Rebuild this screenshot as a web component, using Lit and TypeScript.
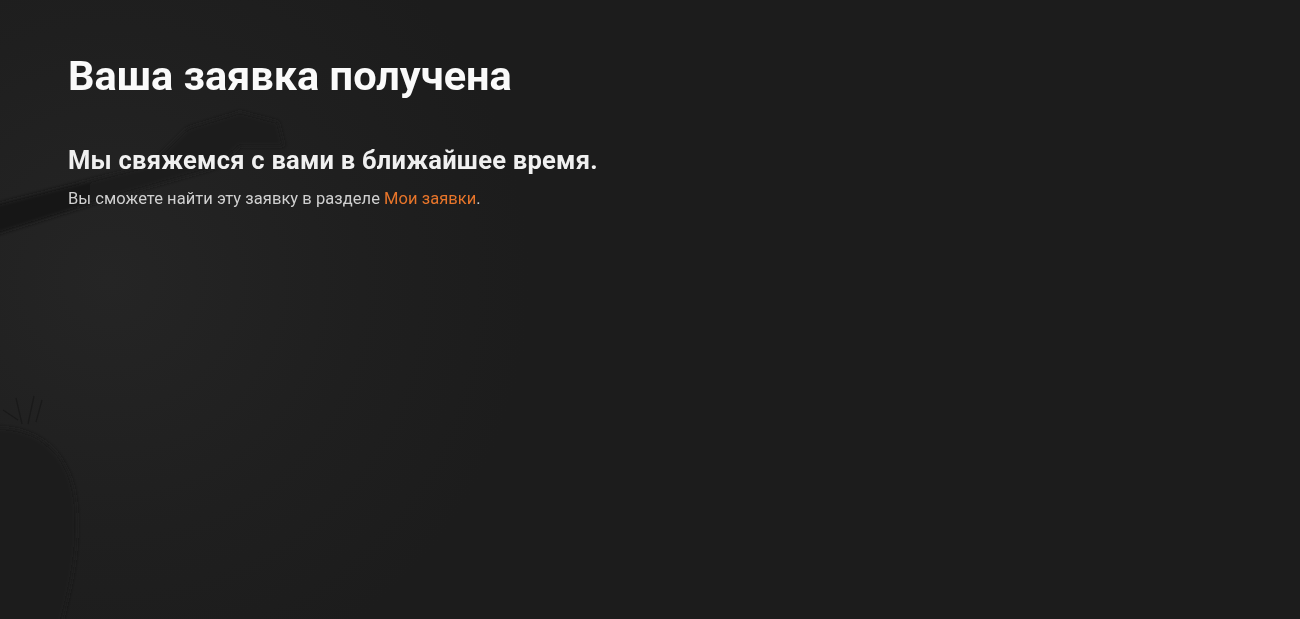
import { LitElement, html, css, svg } from "lit";
import { customElement } from "lit/decorators.js";

@customElement("app-root")
export class AppRoot extends LitElement {
  static styles = css`
    :host {
      display: block;
      position: relative;
      width: 100%;
      height: 619px;
      overflow: hidden;
      background: #1c1c1c;
      font-family: Roboto, "Liberation Sans", sans-serif;
      color: #fff;
    }
    .art {
      position: absolute;
      left: 0;
      top: 0;
      width: 1300px;
      height: 619px;
    }
    .content {
      position: relative;
      display: flex;
      flex-direction: column;
      align-items: flex-start;
      padding: 52px 0 0 68px;
    }
    h1 {
      margin: 0;
      font-size: 41.5px;
      line-height: 48px;
      font-weight: 700;
      color: #fafafa;
      filter: blur(0.5px);
    }
    h2 {
      margin: 44px 0 0;
      font-size: 25.5px;
      line-height: 32px;
      font-weight: 700;
      letter-spacing: 0.24px;
      color: #f0f0f0;
      filter: blur(0.5px);
    }
    p {
      margin: 13px 0 0;
      font-size: 16.5px;
      line-height: 20px;
      letter-spacing: 0.05px;
      color: #d0d0d0;
      filter: blur(0.6px);
    }
    a {
      color: #e8752a;
      text-decoration: none;
    }
  `;

  private art() {
    return svg`
      <defs>
        <radialGradient id="glow" gradientUnits="userSpaceOnUse" cx="110" cy="280" r="420">
          <stop offset="0" stop-color="#252525" />
          <stop offset="0.6" stop-color="#1f1f1f" />
          <stop offset="1" stop-color="#1c1c1c" />
        </radialGradient>
        <linearGradient id="gun" x1="0" y1="0" x2="1" y2="0">
          <stop offset="0" stop-color="#181818" />
          <stop offset="1" stop-color="#1d1d1d" />
        </linearGradient>
        <filter id="soft"><feGaussianBlur stdDeviation="2" /></filter>
      </defs>
      <rect width="1300" height="619" fill="#1c1c1c" />
      <rect width="640" height="619" fill="url(#glow)" />
      <g filter="url(#soft)">
        <path d="M-10 206L150 165L188 128L240 112L278 122L284 146L240 146L215 168L120 195L-10 236Z" fill="url(#gun)" />
        <path d="M-10 428C40 425 72 455 76 505C80 550 70 590 60 629H-10Z" fill="#1b1b1b" />
      </g>
      <path d="M3 410L18 420M16 398L22 424M34 396L28 424M42 400L36 422" stroke="#191919" stroke-width="1.2" fill="none" />
    `;
  }

  render() {
    return html`
      <svg class="art" viewBox="0 0 1300 619" aria-hidden="true">${this.art()}</svg>
      <main class="content">
        <h1>Ваша заявка получена</h1>
        <h2>Мы свяжемся с вами в ближайшее время.</h2>
        <p>Вы сможете найти эту заявку в разделе <a href="#">Мои заявки</a>.</p>
      </main>
    `;
  }
}
